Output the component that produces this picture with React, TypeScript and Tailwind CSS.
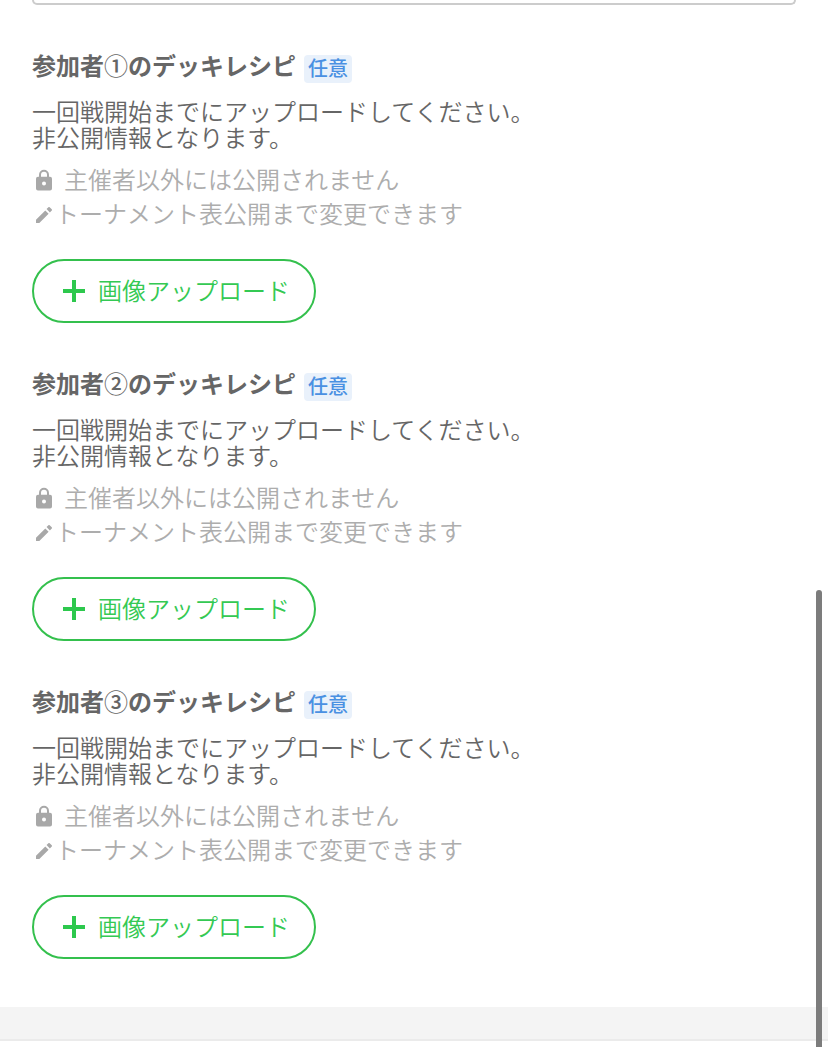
function LockIcon() {
  return (
    <svg className="mt-0.5 h-[22px] w-4 shrink-0" viewBox="0 0 16 22" fill="none">
      <path d="M4 9V5.8a4 4 0 0 1 8 0V9" stroke="#a8a8a8" strokeWidth="2" />
      <path
        fillRule="evenodd"
        d="M2 7.7h12a2 2 0 0 1 2 2v9.8a2 2 0 0 1-2 2H2a2 2 0 0 1-2-2v-9.8a2 2 0 0 1 2-2Zm6 4.8a2 2 0 1 0 0 4 2 2 0 0 0 0-4Z"
        fill="#a8a8a8"
      />
    </svg>
  );
}

function PencilIcon() {
  return (
    <svg className="mt-[3px] size-4 shrink-0" viewBox="3 3 18 18" fill="#a8a8a8">
      <path d="M3 17.25V21h3.75L17.2 10.55l-3.75-3.75L3 17.25zM20.71 7.04a1 1 0 0 0 0-1.41l-2.34-2.34a1 1 0 0 0-1.41 0l-2.1 2.1 3.75 3.75 2.1-2.1z" />
    </svg>
  );
}

function RecipeSection({ mark }: { mark: string }) {
  return (
    <section className="mb-11 px-8">
      <div className="flex h-8 items-center">
        <h2 className="w-[264px] whitespace-nowrap text-2xl leading-8 font-bold text-[#666]">
          参加者<span className="font-medium">{mark}</span>のデッキレシピ
        </h2>
        <span className="mt-2 ml-2 flex h-7 w-12 items-center justify-center rounded bg-[#e9f1fb] pb-0.5 text-xl font-medium whitespace-nowrap text-[#4a90e2]">
          任意
        </span>
      </div>
      <p className="mt-[17px] text-2xl leading-[26px] font-[350] text-[#666]">
        一回戦開始までにアップロードしてください。
        <br />
        非公開情報となります。
      </p>
      <div className="mt-3 text-2xl leading-[34px] font-[350] text-[#adadad]">
        <div className="flex h-[34px] items-center gap-3 pl-1">
          <LockIcon />
          <span>主催者以外には公開されません</span>
        </div>
        <div className="flex h-[34px] items-center gap-[3px] pl-1">
          <PencilIcon />
          <span>トーナメント表公開まで変更できます</span>
        </div>
      </div>
      <button className="mt-[29px] flex h-16 w-[284px] items-center rounded-full border-2 border-[#34c04d] pl-7 text-2xl font-[350] text-[#34c953]">
        <svg className="mr-3 size-6" viewBox="0 0 24 24" fill="none" stroke="#2dc84d" strokeWidth="4">
          <path d="M12 1v22M1 12h22" />
        </svg>
        <span className="-mt-0.5">画像アップロード</span>
      </button>
    </section>
  );
}

export default function App() {
  return (
    <div className="relative flex h-[1047px] w-[828px] flex-col overflow-hidden bg-white font-['Noto_Sans_CJK_JP',sans-serif]">
      <div className="mx-8 mb-11 h-[5px] shrink-0 rounded-b-lg border-2 border-t-0 border-[#ccc]" />
      <main className="h-[958px] shrink-0">
        {["①", "②", "③"].map((mark) => (
          <RecipeSection key={mark} mark={mark} />
        ))}
      </main>
      <footer className="h-[34px] shrink-0 border-b-2 border-[#ebebeb] bg-[#f4f4f4]" />
      <div className="absolute top-[590px] right-1.5 h-[480px] w-1.5 rounded-full bg-[#7c7c7c]" />
    </div>
  );
}
